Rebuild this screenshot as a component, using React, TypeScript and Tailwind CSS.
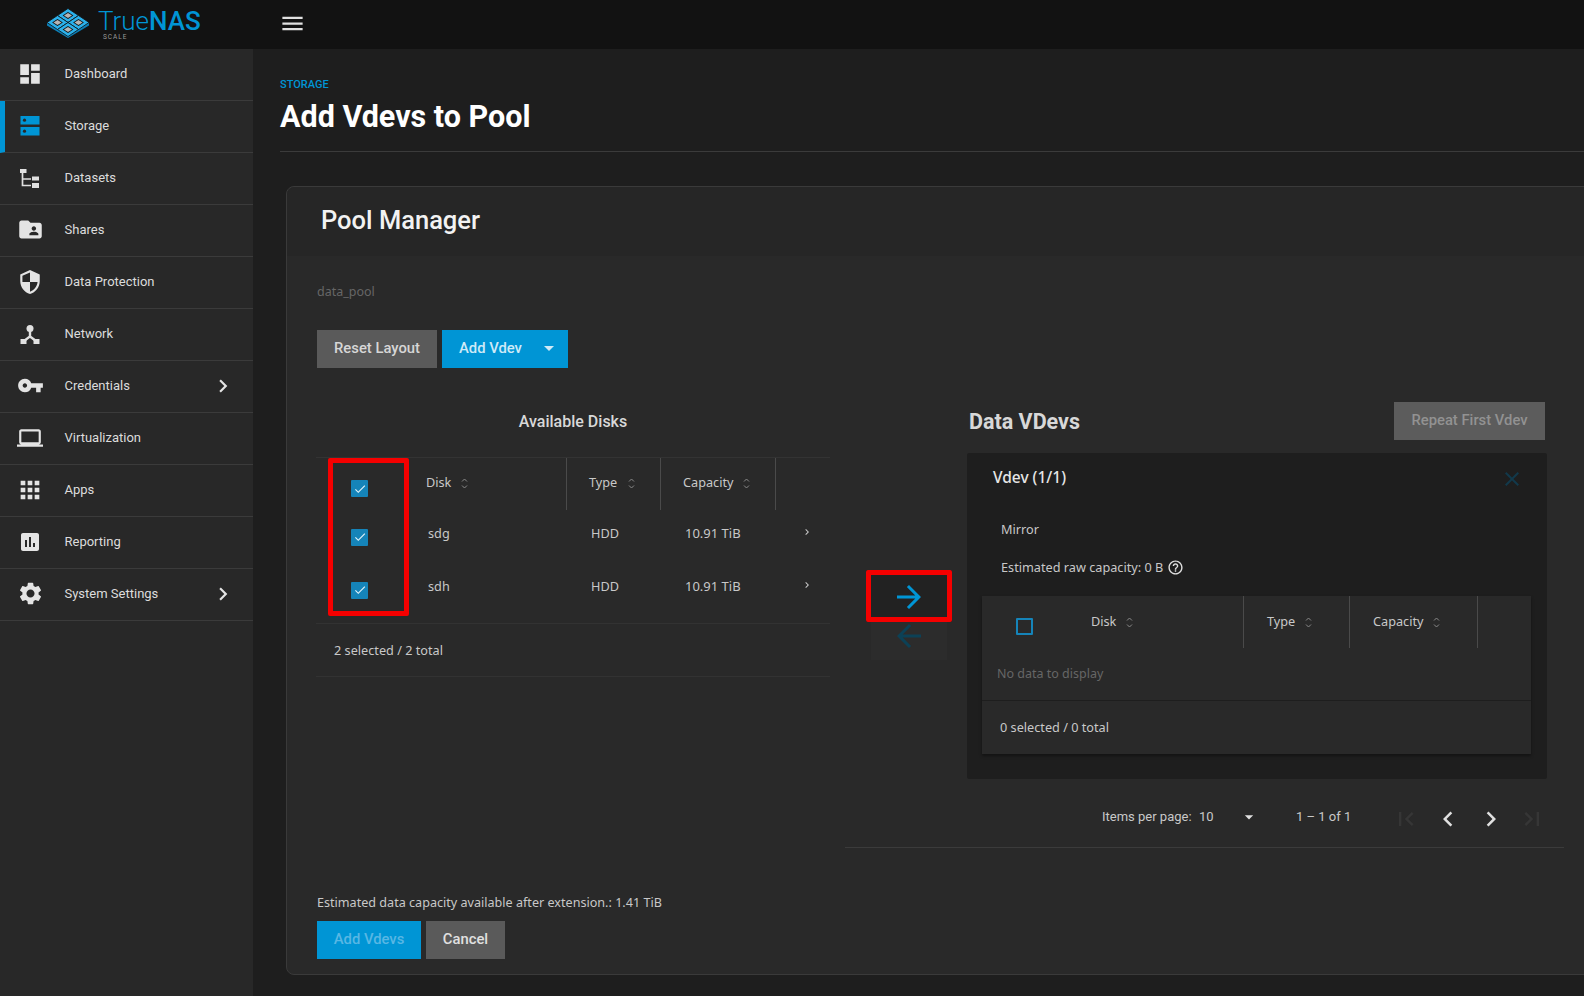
import React from "react";
import {
  MdDashboard,
  MdFolderShared,
  MdSecurity,
  MdVpnKey,
  MdLaptop,
  MdApps,
  MdAssessment,
  MdSettings,
  MdChevronRight,
  MdChevronLeft,
  MdMenu,
  MdArrowDropDown,
  MdArrowForward,
  MdArrowBack,
  MdClose,
  MdFirstPage,
  MdLastPage,
  MdCheck,
  MdHelpOutline,
} from "react-icons/md";

const StorageIcon = () => (
  <svg width="24" height="24" viewBox="0 0 24 24">
    <rect x="2.5" y="2" width="19" height="8.5" fill="#0095d5" />
    <rect x="2.5" y="13" width="19" height="8.5" fill="#0095d5" />
    <circle cx="6.5" cy="6.2" r="1.6" fill="#282828" />
    <circle cx="6.5" cy="17.2" r="1.6" fill="#282828" />
  </svg>
);

const DatasetsIcon = () => (
  <svg width="24" height="24" viewBox="0 0 24 24" fill="#e0e0e0">
    <rect x="2" y="3" width="6.5" height="4" />
    <path d="M4.5 7V19.5H13M4.5 13H13" fill="none" stroke="#e0e0e0" strokeWidth="1.7" />
    <rect x="14" y="10.5" width="7" height="4" />
    <rect x="14" y="17" width="7" height="5" />
  </svg>
);

const NetworkIcon = () => (
  <svg width="24" height="24" viewBox="0 0 24 24" fill="#e0e0e0">
    <circle cx="12" cy="6.5" r="3.5" />
    <path d="M12 9V14.5L6 19M12 14.5L18 19" fill="none" stroke="#e0e0e0" strokeWidth="2.4" />
    <rect x="2.5" y="17" width="6" height="5" />
    <rect x="15.5" y="17" width="6" height="5" />
  </svg>
);

const LogoMark = () => {
  const cells = [
    [21, 7.5],
    [10.5, 14.5],
    [31.5, 14.5],
    [21, 21.5],
  ];
  return (
    <svg width="42" height="30" viewBox="0 0 42 30" className="-mt-[1px]">
      <path d="M0 14.5V17.5L21 30L42 17.5V14.5L21 27Z" fill="#0b7fb8" />
      {cells.map(([x, y]) => (
        <g key={`${x}-${y}`}>
          <polygon
            points={`${x - 10.5},${y} ${x},${y - 7} ${x + 10.5},${y} ${x},${y + 7}`}
            fill="#2bb0ea"
            stroke="#121212"
            strokeWidth="0.8"
          />
          <polygon
            points={`${x - 5.4},${y} ${x},${y - 3.6} ${x + 5.4},${y} ${x},${y + 3.6}`}
            fill="#121212"
          />
          <polygon
            points={`${x - 4},${y} ${x},${y - 2.6} ${x + 4},${y} ${x},${y + 2.6}`}
            fill="#b5b5b5"
          />
        </g>
      ))}
    </svg>
  );
};

const NAV_ITEMS: { label: string; icon: React.ReactNode; arrow?: boolean; active?: boolean }[] = [
  { label: "Dashboard", icon: <MdDashboard size={26} /> },
  { label: "Storage", icon: <StorageIcon />, active: true },
  { label: "Datasets", icon: <DatasetsIcon /> },
  { label: "Shares", icon: <MdFolderShared size={27} /> },
  { label: "Data Protection", icon: <MdSecurity size={26} /> },
  { label: "Network", icon: <NetworkIcon /> },
  { label: "Credentials", icon: <MdVpnKey size={27} />, arrow: true },
  { label: "Virtualization", icon: <MdLaptop size={26} /> },
  { label: "Apps", icon: <MdApps size={28} /> },
  { label: "Reporting", icon: <MdAssessment size={24} /> },
  { label: "System Settings", icon: <MdSettings size={27} />, arrow: true },
];

const SortIcon = () => (
  <svg width="7" height="11" viewBox="0 0 7 11" fill="none" stroke="#8a8a8a" strokeWidth="1">
    <path d="M1 3.5L3.5 1L6 3.5M1 7.5L3.5 10L6 7.5" />
  </svg>
);

const HeaderCell = ({ label, className, gap }: { label: string; className: string; gap: string }) => (
  <div className={`flex items-center h-full text-[12.7px] text-[#c8c8c8] ${className}`}>
    <span>{label}</span>
    <span className={`${gap} flex`}>
      <SortIcon />
    </span>
  </div>
);

const Checkbox = () => (
  <span className="flex items-center justify-center w-[17px] h-[17px] bg-[#1584b9] rounded-[1px] text-[#dff2fb]">
    <MdCheck size={14} />
  </span>
);

const DiskRow = ({ name, height }: { name: string; height: string }) => (
  <div className={`flex items-center text-[12.7px] text-[#c8c8c8] ${height}`}>
    <div className="w-[112px] pl-[35px] pt-[6px]">
      <Checkbox />
    </div>
    <div className="w-[163px]">{name}</div>
    <div className="w-[94px]">HDD</div>
    <div className="w-[116px] text-[13px]">10.91 TiB</div>
    <MdChevronRight size={12} className="text-[#c8c8c8] -mt-[5px]" />
  </div>
);

const Button = ({ className, children }: { className: string; children: React.ReactNode }) => (
  <button
    type="button"
    className={`h-[38px] pb-[2px] flex items-center justify-center text-[14.8px] font-medium font-['Roboto',sans-serif] ${className}`}
  >
    {children}
  </button>
);

export default function App() {
  return (
    <div className="flex flex-col h-screen w-screen overflow-hidden bg-[#1e1e1e] font-['Noto_Sans',sans-serif]">
      <header className="flex items-center h-[49px] shrink-0 bg-[#121212] font-['Roboto',sans-serif]">
        <div className="flex items-center w-[279px] shrink-0 pl-[47px] -mt-[2px]">
          <LogoMark />
          <div className="relative ml-[9px] -mt-[6px] text-[26px] leading-none text-[#0095d5]">
            <span className="font-light">True</span>
            <span className="font-medium">NAS</span>
            <span className="absolute left-[5px] top-[26px] text-[6.5px] leading-[6px] tracking-[1px] text-[#9a9a9a]">
              SCALE
            </span>
          </div>
        </div>
        <MdMenu size={27} className="text-[#e0e0e0] -mt-[2px]" />
      </header>

      <div className="flex flex-1 min-h-0">
        <aside className="w-[253px] shrink-0 bg-[#282828] font-['Roboto',sans-serif]">
          {NAV_ITEMS.map((item) => (
            <div
              key={item.label}
              className={`flex items-center h-[52px] pb-[2px] border-b border-[#3b3b3b] ${
                item.active ? "border-l-[5px] border-l-[#0095d5]" : ""
              }`}
            >
              <div
                className={`flex items-center justify-center text-[#e4e4e4] shrink-0 ${
                  item.active ? "w-[50px]" : "w-[60px]"
                }`}
              >
                {item.icon}
              </div>
              <span className={`text-[13px] text-[#dcdcdc] ${item.active ? "ml-[9.5px]" : "ml-[4.5px]"}`}>
                {item.label}
              </span>
              {item.arrow && <MdChevronRight size={26} className="ml-auto mr-[17px] text-[#e4e4e4]" />}
            </div>
          ))}
        </aside>

        <main className="flex-1 min-w-0 overflow-hidden pt-[28px] pl-[27px]">
          <div className="border-b border-[#3b3b3b] pb-[10px]">
            <div className="text-[11px] leading-4 font-medium text-[#0095d5] font-['Roboto',sans-serif]">STORAGE</div>
            <h1 className="text-[30.5px] leading-[48px] font-bold text-white font-['Roboto',sans-serif]">
              Add Vdevs to Pool
            </h1>
          </div>

          <section className="mt-[34px] ml-[6px] w-[1320px] border border-[#3a3a3a] rounded-lg bg-[#292929]">
            <div className="flex items-center h-[69px] pb-[2px] pl-[34px] rounded-t-lg bg-[#262626]">
              <h2 className="text-[25.5px] font-medium text-[#f2f2f2] font-['Roboto',sans-serif]">Pool Manager</h2>
            </div>

            <div className="pl-[30px] pb-[15px]">
              <div className="mt-[26px] h-5 text-[12.5px] leading-5 text-[#666]">data_pool</div>

              <div className="flex gap-[5px] mt-[28px]">
                <Button className="w-[120px] bg-[#5a5a5a] text-[#d6d6d6]">Reset Layout</Button>
                <Button className="w-[126px] pl-[7px] bg-[#0095d5] text-[#cfeaf7]">
                  Add Vdev
                  <MdArrowDropDown size={24} className="ml-[15px] -mr-[3px]" />
                </Button>
              </div>

              <div className="flex mt-[34px]">
                <div className="w-[514px] -ml-px shrink-0">
                  <div className="flex items-center justify-center h-[38px] pt-[2px] text-[16px] font-medium text-[#d8d8d8] font-['Roboto',sans-serif]">
                    Available Disks
                  </div>
                  <div className="relative mt-[17px] border-t border-[#333]">
                    <div className="flex h-[52px]">
                      <div className="flex items-center w-[110px] pl-[35px] pt-[9px]">
                        <Checkbox />
                      </div>
                      <HeaderCell label="Disk" gap="ml-[10px]" className="w-[141px] pb-[2px] border-r border-[#4a4a4a]" />
                      <HeaderCell label="Type" gap="ml-[11px]" className="w-[94px] pl-[22px] pb-[2px] border-r border-[#4a4a4a]" />
                      <HeaderCell label="Capacity" gap="ml-[10px]" className="w-[115px] pl-[22px] pb-[2px] border-r border-[#4a4a4a]" />
                    </div>
                    <DiskRow name="sdg" height="h-[46px] pt-[2px]" />
                    <DiskRow name="sdh" height="h-[67px] pb-[5px]" />
                    <div className="flex items-center h-[54px] pt-[2px] pl-[18px] border-y border-[#323232] text-[12.7px] text-[#c8c8c8]">
                      2 selected / 2 total
                    </div>
                    {/* annotation drawn over the first column */}
                    <div className="absolute left-[12px] top-0 w-[81px] h-[158px] border-[5px] border-[#f50000] rounded-[2px]" />
                  </div>
                </div>

                <div className="w-[86px] ml-[36px] mr-[15px] shrink-0 pt-[168px]">
                  <div className="relative flex items-center justify-center h-[52px] pt-[2px] bg-[#222]">
                    <MdArrowForward size={36} className="text-[#0095d5]" />
                    <div className="absolute inset-0 border-[5px] border-[#f50000] rounded-[2px]" />
                  </div>
                  <div className="flex items-center justify-center h-[38px] pb-[10px] mx-[5px] bg-[#2c2c2c]">
                    <MdArrowBack size={36} className="text-[#0c4156]" />
                  </div>
                </div>

                <div className="w-[580px] shrink-0">
                  <div className="flex items-center justify-between h-[38px] pl-[2px]">
                    <h3 className="text-[21.5px] pt-[2px] font-bold text-[#d8d8d8] font-['Roboto',sans-serif]">Data VDevs</h3>
                    <Button className="w-[151px] mr-[2px] bg-[#5c5c5c] text-[#929292]">Repeat First Vdev</Button>
                  </div>

                  <div className="mt-[13px] h-[326px] bg-[#1e1e1e] pt-[15px] rounded-[2px]">
                    <div className="flex items-center justify-between h-5 pl-[26px] pr-[23px]">
                      <span className="text-[15.5px] font-medium text-[#e6e6e6]">Vdev (1/1)</span>
                      <MdClose size={24} className="text-[#12394b] mt-[2px]" />
                    </div>
                    <div className="mt-[31px] pl-[34px] h-5 text-[12.7px] leading-5 text-[#c8c8c8]">Mirror</div>
                    <div className="flex items-center gap-[4px] mt-[19px] pl-[34px] h-5 text-[12.7px] text-[#c8c8c8]">
                      Estimated raw capacity: 0 B
                      <MdHelpOutline size={17} className="text-[#e0e0e0] -mt-[2px]" />
                    </div>

                    <div className="ml-[15px] w-[549px] mt-[18px] h-[158px] bg-[#292929] shadow-[0_2px_3px_rgba(0,0,0,0.4)]">
                      <div className="flex h-[52px]">
                        <div className="flex items-center w-[109px] pl-[34px] pt-[8px]">
                          <span className="w-[17px] h-[17px] border-[2px] border-[#1584b9] rounded-[1px]" />
                        </div>
                        <HeaderCell label="Disk" gap="ml-[10px]" className="w-[153px] border-r border-[#4a4a4a]" />
                        <HeaderCell label="Type" gap="ml-[10px]" className="w-[106px] pl-[23px] border-r border-[#4a4a4a]" />
                        <HeaderCell label="Capacity" gap="ml-[10px]" className="w-[128px] pl-[23px] border-r border-[#4a4a4a]" />
                      </div>
                      <div className="flex items-center h-[53px] pl-[15px] border-b border-[#1e1e1e] text-[12.5px] text-[#666]">
                        No data to display
                      </div>
                      <div className="flex items-center h-[53px] pl-[18px] text-[12.7px] text-[#c8c8c8]">
                        0 selected / 0 total
                      </div>
                    </div>
                  </div>

                  <div className="relative flex items-center h-[69px] pt-[8px] w-[719px] -ml-[122px] pl-[257px] border-b border-[#3b3b3b] text-[13px] text-[#c8c8c8] font-['Roboto',sans-serif]">
                    <span className="w-[97px]">Items per page:</span>
                    <span className="w-[40px]">10</span>
                    <MdArrowDropDown size={20} className="text-[#e0e0e0]" />
                    <span className="ml-[37px] w-[96px]">1 – 1 of 1</span>
                    <MdFirstPage size={28} className="mt-[3px] text-[#363636]" />
                    <MdChevronLeft size={30} className="mt-[3px] ml-[13px] text-[#e0e0e0]" />
                    <MdChevronRight size={30} className="mt-[3px] ml-[13px] text-[#e0e0e0]" />
                    <MdLastPage size={28} className="mt-[3px] ml-[12px] text-[#363636]" />
                  </div>
                </div>
              </div>

              <div className="mt-[45px] h-5 text-[12.6px] leading-5 text-[#c8c8c8]">
                Estimated data capacity available after extension.: 1.41 TiB
              </div>
              <div className="flex gap-[5px] mt-[8px]">
                <Button className="w-[104px] bg-[#0095d5] text-[#58b7e4]">Add Vdevs</Button>
                <Button className="w-[79px] bg-[#5a5a5a] text-[#e0e0e0]">Cancel</Button>
              </div>
            </div>
          </section>
        </main>
      </div>
    </div>
  );
}
